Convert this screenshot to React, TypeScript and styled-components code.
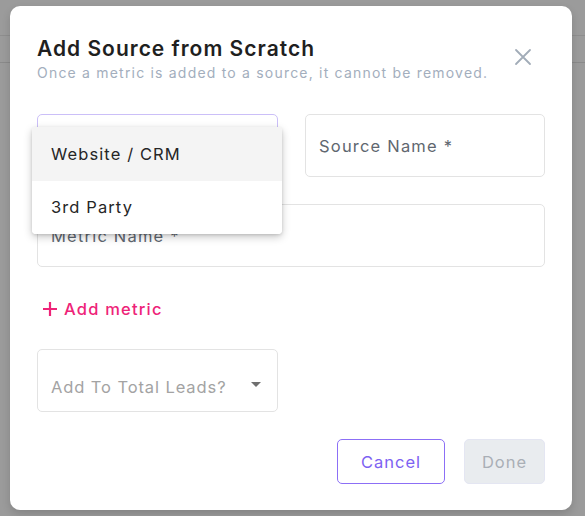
import React from "react";
import styled, { createGlobalStyle } from "styled-components";

const Global = createGlobalStyle`
  html, body { margin: 0; padding: 0; }
  body { font-family: "Inter", "Noto Sans", sans-serif; }
  * { box-sizing: border-box; }
`;

const Page = styled.div`
  width: 585px;
  height: 516px;
  background: #9b9b9b;
  position: relative;
  overflow: hidden;
`;

const BackdropLines = styled.div`
  position: absolute;
  left: 0;
  right: 0;
  top: 35px;
  height: 28px;
  border-top: 1px solid #8e8e8e;
  border-bottom: 1px solid #8a8a8a;
`;

const Dialog = styled.div`
  position: absolute;
  left: 10px;
  top: 6px;
  width: 562px;
  height: 504px;
  background: #fff;
  border-radius: 10px;
  padding: 30px 27px 26px 27px;
  display: flex;
  flex-direction: column;
  box-shadow: 0 4px 8px rgba(0,0,0,0.15);
`;

const Header = styled.div`
  display: flex;
  justify-content: space-between;
  align-items: flex-start;
`;

const Title = styled.h2`
  margin: 0;
  font-size: 21px;
  font-weight: 600;
  color: #1f1f1f;
  letter-spacing: 1px;
  line-height: 26px;
`;

const Subtitle = styled.p`
  margin: 2px 0 0 0;
  font-size: 14px;
  color: #a3aebd;
  letter-spacing: 1.2px;
  line-height: 18px;
`;

const CloseButton = styled.button`
  border: none;
  background: none;
  padding: 0;
  margin: 12px 13px 0 0;
  width: 18px;
  height: 18px;
  display: flex;
  cursor: pointer;
`;

const Form = styled.div`
  margin-top: 32px;
  display: flex;
  flex-direction: column;
`;

const Row = styled.div`
  display: grid;
  grid-template-columns: 241px 240px;
  column-gap: 27px;
  position: relative;
`;

const Field = styled.div<{ $focused?: boolean; $w?: string }>`
  height: 63px;
  width: ${(p) => p.$w || "auto"};
  border: 1px solid ${(p) => (p.$focused ? "#cbbff8" : "#e3e3e3")};
  border-radius: 5px;
  display: flex;
  align-items: center;
  padding: 0 13px;
  position: relative;
`;

const Label = styled.span<{ $muted?: boolean }>`
  font-size: 16.5px;
  color: ${(p) => (p.$muted ? "#a3a3a3" : "#5f6770")};
  letter-spacing: ${(p) => (p.$muted ? "0.9px" : "1.2px")};
`;

const SelectField = styled(Field)`
  align-items: flex-end;
  padding-bottom: 14px;
  justify-content: space-between;
  padding-right: 16px;
`;

const Caret = styled.span`
  width: 0;
  height: 0;
  border-left: 5px solid transparent;
  border-right: 5px solid transparent;
  border-top: 5px solid #6f6f6f;
  margin-bottom: 10px;
`;

const Menu = styled.ul`
  position: absolute;
  left: -5px;
  top: 13px;
  width: 250px;
  margin: 0;
  padding: 0;
  list-style: none;
  background: #fff;
  border-radius: 4px;
  box-shadow: 0 3px 8px rgba(0,0,0,0.22), 0 1px 3px rgba(0,0,0,0.12);
  z-index: 5;
  overflow: hidden;
`;

const MenuItem = styled.li<{ $active?: boolean }>`
  height: 53.5px;
  display: flex;
  align-items: center;
  padding-left: 19px;
  font-size: 16.5px;
  color: #262626;
  letter-spacing: 1.1px;
  background: ${(p) => (p.$active ? "#f4f4f4" : "#fff")};
`;

const AddMetric = styled.button`
  margin-top: 32px;
  align-self: flex-start;
  border: none;
  background: none;
  padding: 0 0 0 4px;
  display: flex;
  align-items: center;
  gap: 5px;
  color: #ee2378;
  font-family: inherit;
  font-size: 16.5px;
  font-weight: 500;
  letter-spacing: 1.2px;
  cursor: pointer;
`;

const Footer = styled.div`
  margin-top: auto;
  display: flex;
  justify-content: flex-end;
  gap: 19px;
`;

const Button = styled.button<{ $variant: "outline" | "disabled" }>`
  height: 45px;
  border-radius: 5px;
  font-family: inherit;
  font-size: 16.5px;
  letter-spacing: 1px;
  padding: 0;
  ${(p) =>
    p.$variant === "outline"
      ? `width: 108px; border: 1px solid #8c6ff6; background: #fff; color: #7d62f2;`
      : `width: 81px; border: 1px solid #e4e6f2; background: #e9ecef; color: #a9afb6;`}
`;

export default function App() {
  return (
    <>
      <Global />
      <Page>
        <BackdropLines />
        <Dialog>
          <Header>
            <div>
              <Title>Add Source from Scratch</Title>
              <Subtitle>Once a metric is added to a source, it cannot be removed.</Subtitle>
            </div>
            <CloseButton aria-label="Close">
              <svg width="18" height="18" viewBox="0 0 18 18">
                <path d="M2 2 L16 16 M16 2 L2 16" stroke="#a2acb8" strokeWidth="1.8" strokeLinecap="round" />
              </svg>
            </CloseButton>
          </Header>
          <Form>
            <Row>
              <Field $focused />
              <Field>
                <Label>Source Name *</Label>
              </Field>
              <Menu>
                <MenuItem $active>Website / CRM</MenuItem>
                <MenuItem>3rd Party</MenuItem>
              </Menu>
            </Row>
            <Field style={{ marginTop: 27 }}>
              <Label>Metric Name *</Label>
            </Field>
            <AddMetric>
              <svg width="18" height="18" viewBox="0 0 18 18">
                <path d="M9 2 V16 M2 9 H16" stroke="#ee2378" strokeWidth="2.2" />
              </svg>
              Add metric
            </AddMetric>
            <SelectField $w="241px" style={{ marginTop: 30 }}>
              <Label $muted>Add To Total Leads?</Label>
              <Caret />
            </SelectField>
          </Form>
          <Footer>
            <Button $variant="outline">Cancel</Button>
            <Button $variant="disabled">Done</Button>
          </Footer>
        </Dialog>
      </Page>
    </>
  );
}
